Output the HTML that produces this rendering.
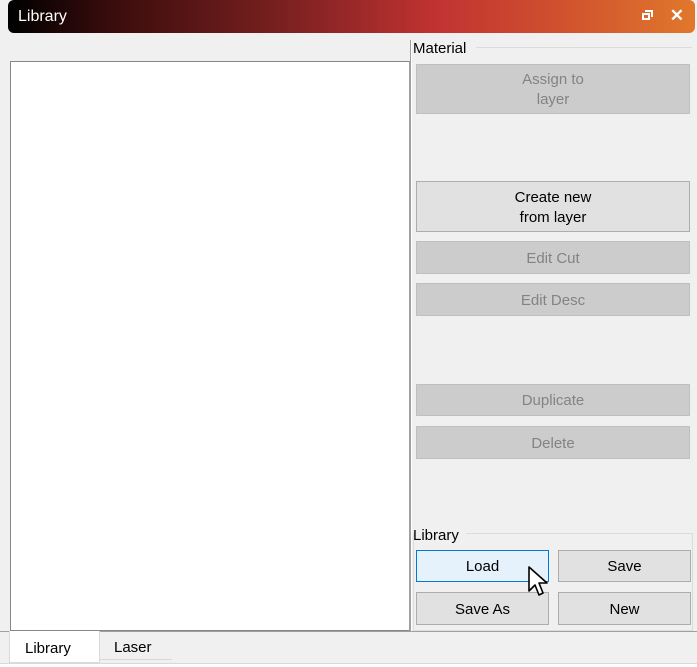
<!DOCTYPE html><html><head><style>
body{margin:0;width:697px;height:667px;background:#f0f0f0;font-family:"Liberation Sans",sans-serif;font-size:15px;position:relative;overflow:hidden}
.a{position:absolute;box-sizing:border-box}
.title{left:8px;top:0;width:687px;height:33px;border-radius:6px;background:linear-gradient(90deg,#000 0%,#3a0c0c 15%,#7a2020 40%,#c03232 62%,#d0502e 80%,#e0782c 100%);color:#fff;font-size:16px}
.b{display:flex;align-items:center;justify-content:center;text-align:center;line-height:20px;border:1px solid #adadad;background:#e1e1e1;color:#000;padding-top:2px}
.d{background:#cccccc;border-color:#bfbfbf;color:#838383}
</style></head><body>
<div class="a title"><span style="position:absolute;left:10px;top:8px">Library</span>
<div class="a" style="right:45px;top:13px;width:8px;height:7px;border:2px solid #fff"></div>
<div class="a" style="right:42px;top:10px;width:8px;height:7px;border-top:2px solid #fff;border-right:2px solid #fff"></div>
<span style="position:absolute;right:11px;top:6px;font-size:17px;font-weight:bold">✕</span></div>
<div class="a" style="left:10px;top:61px;width:400px;height:570px;background:#fff;border:1px solid #828790;border-right-color:#a0a0a0"></div>
<div class="a" style="left:410px;top:40px;width:2px;height:592px;border-left:1px solid #a0a0a0;border-right:1px solid #fff"></div>
<div class="a" style="left:413px;top:40px">Material</div>
<div class="a" style="left:476px;top:47px;width:216px;height:1px;background:#dcdcdc"></div>
<div class="a b d" style="left:416px;top:64px;width:274px;height:50px">Assign to<br>layer</div>
<div class="a b" style="left:416px;top:181px;width:274px;height:51px">Create new<br>from layer</div>
<div class="a b d" style="left:416px;top:241px;width:274px;height:33px">Edit Cut</div>
<div class="a b d" style="left:416px;top:283px;width:274px;height:33px">Edit Desc</div>
<div class="a b d" style="left:416px;top:384px;width:274px;height:32px">Duplicate</div>
<div class="a b d" style="left:416px;top:426px;width:274px;height:33px">Delete</div>
<div class="a" style="left:413px;top:527px">Library</div>
<div class="a" style="left:466px;top:533px;width:226px;height:1px;background:#dcdcdc"></div>
<div class="a" style="left:413px;top:533px;width:280px;height:98px;border:1px solid #dcdcdc;border-top:none"></div>
<div class="a b" style="left:416px;top:550px;width:133px;height:32px;background:#e5f1fb;border-color:#0078d7">Load</div>
<div class="a b" style="left:558px;top:550px;width:133px;height:32px">Save</div>
<div class="a b" style="left:416px;top:592px;width:133px;height:33px">Save As</div>
<div class="a b" style="left:558px;top:592px;width:133px;height:33px">New</div>
<svg class="a" style="left:527px;top:565px" width="22" height="32" viewBox="0 0 11 16"><path d="M1 1v12l3-3 2 5 2-1-2-5h4z" fill="#fff" stroke="#000" stroke-width="0.8" stroke-linejoin="round"/></svg>
<div class="a" style="left:0;top:631px;width:697px;height:1px;background:#a0a0a0"></div>
<div class="a" style="left:9px;top:631px;width:91px;height:32px;background:#fff;border:1px solid #d9d9d9;border-top:none"></div>
<div class="a" style="left:25px;top:640px">Library</div>
<div class="a" style="left:114px;top:639px">Laser</div>
<div class="a" style="left:100px;top:659px;width:72px;height:1px;background:#d9d9d9"></div>
<div class="a" style="left:0;top:663px;width:697px;height:4px;background:#fff;border-top:1px solid #d9d9d9"></div>
</body></html>
